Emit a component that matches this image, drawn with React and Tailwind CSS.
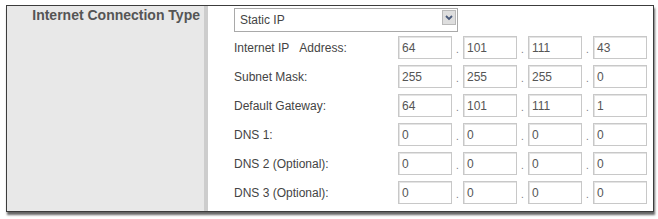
// App.jsx
import React from 'react';

const rows = [
  { label: 'Internet IP\u00a0\u00a0\u00a0Address:', values: ['64', '101', '111', '43'] },
  { label: 'Subnet Mask:', values: ['255', '255', '255', '0'] },
  { label: 'Default Gateway:', values: ['64', '101', '111', '1'] },
  { label: 'DNS 1:', values: ['0', '0', '0', '0'] },
  { label: 'DNS 2 (Optional):', values: ['0', '0', '0', '0'] },
  { label: 'DNS 3 (Optional):', values: ['0', '0', '0', '0'] },
];

// One octet box of an IP address
const Octet = ({ value }) => (
  <div className="w-[54px] h-[23px] border border-[#c8c8c8] bg-white shadow-[inset_1px_1px_0_#e4e4e4] pl-[3px] flex items-center text-[12px] text-[#555]">
    {value}
  </div>
);

const App = () => {
  return (
    <div className="w-[658px] h-[219px] bg-white pt-[5px] pl-[6px]" style={{ fontFamily: '"Liberation Sans", Arial, sans-serif' }}>
      <div className="w-[648px] h-[207px] border border-[#3c3c3c] flex bg-white shadow-[1px_3px_2px_rgba(0,0,0,0.6)]">
        {/* Left label column */}
        <div className="w-[201px] h-full bg-[#e8e8e8] border-r-[4px] border-[#cdcdcd] flex justify-end pr-[4px] pt-[1px]">
          <span className="text-[14px] font-bold text-[#555] leading-[16px]">Internet Connection Type</span>
        </div>

        {/* Right form column */}
        <div className="flex-1 pl-[26px] pt-[2px]">
          <div className="w-[224px] h-[24px] border border-[#a9a9a9] bg-white flex items-start justify-between">
            <span className="text-[12px] text-[#444] pl-[5px] leading-[22px]">Static IP</span>
            <div className="mt-[1px] mr-[1px] w-[14px] h-[15px] border border-[#b9b9b9] bg-[#dedede] flex items-center justify-center">
              <svg width="8" height="6" viewBox="0 0 8 6">
                <path d="M1 1 L4 4 L7 1" fill="none" stroke="#4a5a7a" strokeWidth="1.8" />
              </svg>
            </div>
          </div>

          <div className="mt-[4px] flex flex-col gap-[6px]">
            {rows.map((row) => (
              <div key={row.label} className="flex items-center h-[23px]">
                <div className="w-[164px] text-[12px] text-[#444] whitespace-pre">{row.label}</div>
                {row.values.map((v, i) => (
                  <React.Fragment key={i}>
                    {i > 0 && (
                      <div className="w-[11px] h-[23px] flex items-end justify-center pb-[4px] text-[10px] text-[#777] leading-none">.</div>
                    )}
                    <Octet value={v} />
                  </React.Fragment>
                ))}
              </div>
            ))}
          </div>
        </div>
      </div>
    </div>
  );
};

export default App;
